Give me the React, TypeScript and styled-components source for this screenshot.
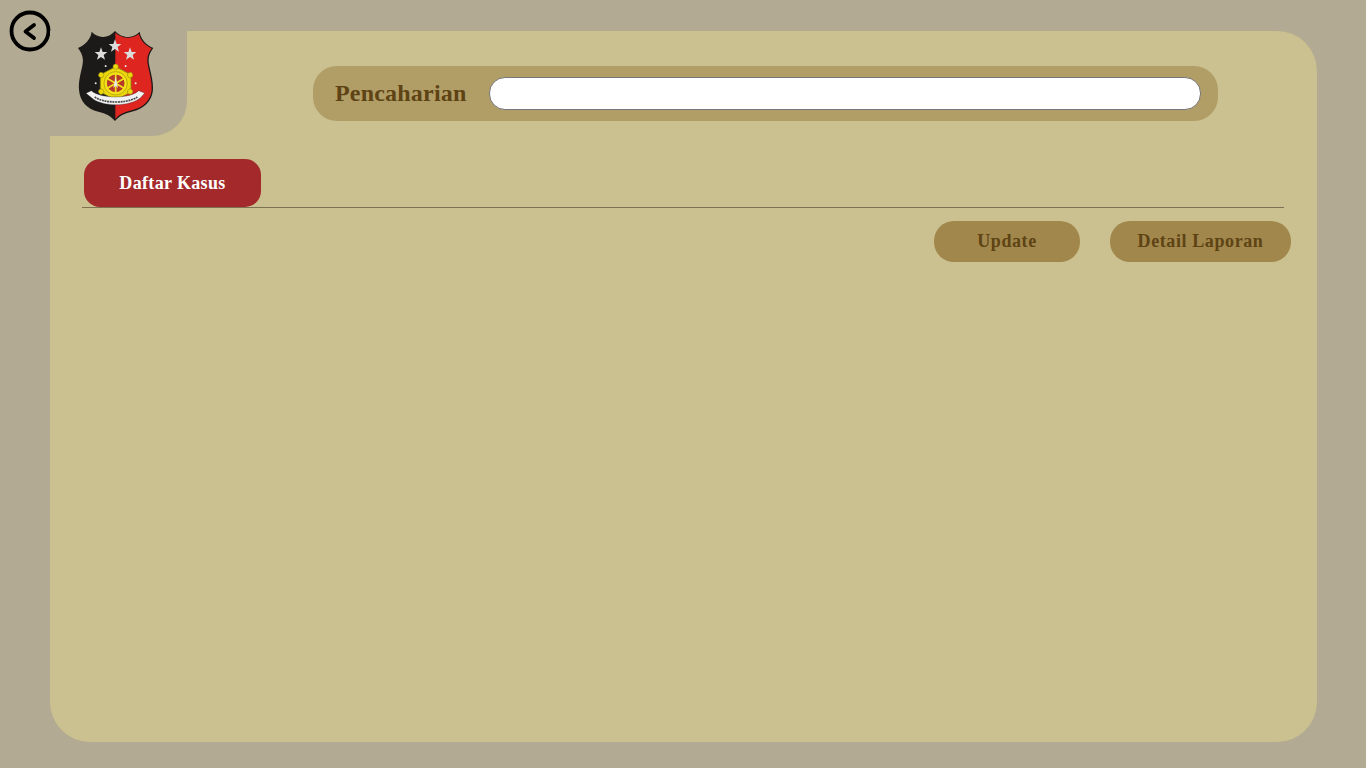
import React from "react";
import styled, { createGlobalStyle } from "styled-components";

const GlobalStyle = createGlobalStyle`
  html, body {
    margin: 0;
    padding: 0;
    background: #b2aa92;
  }
  * {
    box-sizing: border-box;
  }
`;

const Page = styled.div`
  position: relative;
  display: flex;
  width: 100%;
  height: 768px;
  padding: 31px 49px 26px 50px;
  overflow: hidden;
  background: #b2aa92;
  font-family: "Liberation Serif", "Times New Roman", serif;
`;

const BackButton = styled.button`
  position: absolute;
  top: 10px;
  left: 9px;
  width: 42px;
  height: 42px;
  padding: 0;
  border: 0;
  background: transparent;
  cursor: pointer;
`;

const Panel = styled.main`
  position: relative;
  flex: 1;
  padding: 35px 26px 0 0;
  border-radius: 40px;
  background: #cbc08f;
`;

// 왼쪽 위 로고 자리 - 패널 위에 겹쳐서 파낸 모양
const LogoCorner = styled.div`
  position: absolute;
  top: 0;
  left: 0;
  width: 137px;
  height: 105px;
  border-bottom-right-radius: 35px;
  background: #b2aa92;
`;

const Logo = styled.svg`
  position: absolute;
  top: -6px;
  left: 20px;
  width: 90px;
  height: 100px;
`;

const SearchBar = styled.div`
  display: flex;
  align-items: flex-start;
  width: 905px;
  height: 55px;
  margin-left: 263px;
  padding: 11px 17px 0 22px;
  border-radius: 24px;
  background: #b19d66;
`;

const SearchLabel = styled.label`
  width: 154px;
  color: #5e4314;
  font-size: 24px;
  line-height: 32px;
  font-weight: 700;
  letter-spacing: 0.2px;
`;

const SearchInput = styled.input`
  flex: 1;
  height: 33px;
  border: 1px solid #767676;
  border-radius: 16px;
  background: #fff;
  outline: none;
`;

const TabBar = styled.nav`
  display: flex;
  width: 1202px;
  margin: 38px 0 0 32px;
  padding-left: 2px;
  border-bottom: 1px solid #7d7352;
`;

const Tab = styled.button`
  width: 177px;
  height: 48px;
  padding: 0;
  border: 0;
  border-radius: 16px;
  background: #a3292b;
  color: #fff;
  font-family: inherit;
  font-size: 18px;
  font-weight: 700;
  letter-spacing: 0.35px;
`;

const Actions = styled.div`
  display: flex;
  justify-content: flex-end;
  gap: 30px;
  margin-top: 13px;
`;

const ActionButton = styled.button<{ $width: number }>`
  width: ${(props) => props.$width}px;
  height: 41px;
  padding: 0;
  border: 0;
  border-radius: 20px;
  background: #a1874c;
  color: #5e4314;
  font-family: inherit;
  font-size: 18px;
  font-weight: 700;
  letter-spacing: 0.6px;
`;

const starPath = "M0 -20 L5 -6 L19 -6 L8 3 L12 17 L0 9 L-12 17 L-8 3 L-19 -6 L-5 -6 Z";

const spokes = [0, 60, 120, 180, 240, 300];

function PoliceLogo() {
  return (
    <Logo viewBox="0 0 270 300">
      <path
        d="M135 18 C124 30 110 37 98 36 C86 35 74 30 65 20 C62 42 46 60 24 69 C36 85 42 100 37 122 C31 150 25 170 27 195 C30 228 50 252 85 260 C108 265 124 274 135 288 C146 274 162 265 185 260 C222 252 246 228 249 195 C250 170 244 150 238 122 C233 100 238 85 250 69 C228 60 212 42 209 20 C200 30 188 35 176 36 C162 37 146 30 135 18 Z"
        fill="#1c1a19"
      />
      <path
        d="M136 23 C146 32 162 39 176 38 C188 37 200 33 207 27 C211 46 226 62 245 70 C234 85 229 100 234 122 C240 150 246 170 245 195 C242 226 220 248 185 256 C162 261 146 270 136 282 Z"
        fill="#de2520"
      />
      <g fill="#dcdcdc">
        <path d={starPath} transform="translate(93 87)" />
        <path d={starPath} transform="translate(135 63)" />
        <path d={starPath} transform="translate(180 87)" />
      </g>
      <g transform="translate(137 175)">
        {spokes.map((angle) => (
          <circle key={angle} cx="0" cy="-60" r="3" fill="#e6e6e6" transform={`rotate(${angle + 30})`} />
        ))}
        <path
          d="M0 -50 L46 -26 L46 26 L0 50 L-46 26 L-46 -26 Z"
          fill="#ecd80c"
          stroke="#8a7f12"
          strokeWidth="2.5"
          strokeLinejoin="round"
        />
        {spokes.map((angle) => (
          <circle
            key={angle}
            cx="0"
            cy="-50"
            r="8"
            fill="#ecd80c"
            stroke="#8a7f12"
            strokeWidth="1.5"
            transform={`rotate(${angle})`}
          />
        ))}
        <circle r="30" fill="#b5392a" stroke="#f3e21a" strokeWidth="7" />
        <circle r="35" fill="none" stroke="#8a7f12" strokeWidth="1.5" />
        {spokes.map((angle) => (
          <line
            key={angle}
            x1="0"
            y1="0"
            x2="0"
            y2="-29"
            stroke="#f3e21a"
            strokeWidth="5"
            transform={`rotate(${angle})`}
          />
        ))}
        <path d="M0 -20 L7 14 L0 7 L-7 14 Z" fill="#e8e8e8" />
      </g>
      <path
        d="M48 205 L64 197 C92 222 182 222 206 197 L224 204 L214 216 C182 247 92 247 62 216 Z"
        fill="#f2f2f2"
        stroke="#222"
        strokeWidth="1"
      />
      <path
        d="M74 216 C102 236 174 236 202 216"
        fill="none"
        stroke="#4a4a4a"
        strokeWidth="5"
        strokeDasharray="6 2"
      />
    </Logo>
  );
}

export default function App() {
  return (
    <Page>
      <GlobalStyle />
      <BackButton aria-label="Kembali">
        <svg width="42" height="42" viewBox="0 0 42 42">
          <circle cx="21" cy="21" r="18.5" fill="none" stroke="#000" strokeWidth="3.8" />
          <path
            d="M25 15 L16.5 21.5 L25 28"
            fill="none"
            stroke="#000"
            strokeWidth="3.8"
            strokeLinecap="round"
            strokeLinejoin="round"
          />
        </svg>
      </BackButton>
      <Panel>
        <LogoCorner>
          <PoliceLogo />
        </LogoCorner>
        <SearchBar>
          <SearchLabel htmlFor="search">Pencaharian</SearchLabel>
          <SearchInput id="search" />
        </SearchBar>
        <TabBar>
          <Tab>Daftar Kasus</Tab>
        </TabBar>
        <Actions>
          <ActionButton $width={146}>Update</ActionButton>
          <ActionButton $width={181}>Detail Laporan</ActionButton>
        </Actions>
      </Panel>
    </Page>
  );
}
